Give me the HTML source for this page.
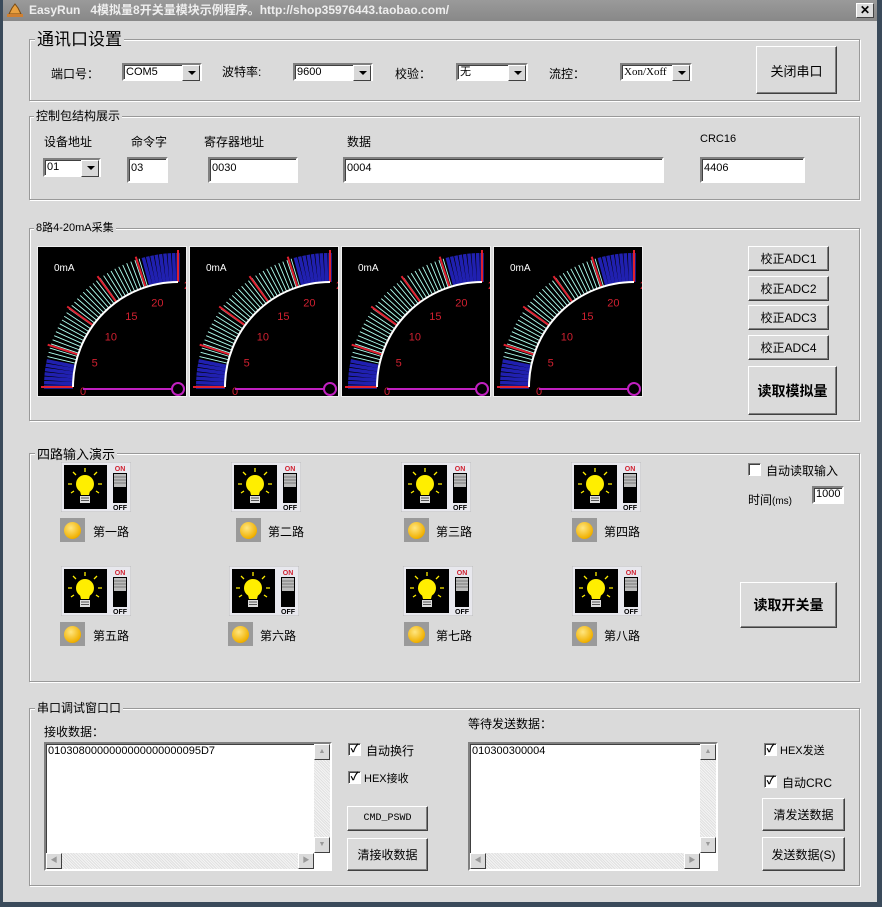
<!DOCTYPE html>
<html><head><meta charset="utf-8">
<style>
*{box-sizing:border-box;margin:0;padding:0}
body{width:882px;height:907px;background:#3a4a5a;font-family:"Liberation Sans","Noto Sans CJK SC","WenQuanYi Zen Hei",sans-serif;font-size:12px;color:#000;position:relative;overflow:hidden}
.abs{position:absolute}
#win{position:absolute;left:3px;top:0;width:874px;height:902px;background:#dadada}
#title{position:absolute;left:3px;top:0;width:874px;height:21px;background:linear-gradient(#9a9a9a,#888);color:#eee;font-weight:bold;font-size:12px;line-height:21px;padding-left:26px}
.close{position:absolute;left:856px;top:3px;width:18px;height:15px;background:#dcdcdc;border:1px solid;border-color:#fff #444 #444 #fff;font:bold 12px "Liberation Sans";text-align:center;line-height:13px}
.grp{position:absolute;border:1px solid #999;box-shadow:1px 1px 0 #fff, inset 1px 1px 0 #fff}
.gl{position:absolute;background:#dadada;padding:0 2px;white-space:nowrap}
.t{position:absolute;white-space:nowrap}
.in{position:absolute;background:#fff;border:2px solid;border-color:#808080 #fff #fff #808080;box-shadow:inset 1px 1px 0 #404040;font-size:11px;padding:2px 2px;line-height:14px;font-family:"Liberation Sans",sans-serif}
.cb{position:absolute;background:#fff;border:2px solid;border-color:#808080 #fff #fff #808080;box-shadow:inset 1px 1px 0 #404040;font-size:11px;padding:1px 2px;line-height:13px}
.cb::after{content:"";position:absolute;right:0;top:0;width:16px;height:100%;background:#d8d8d8 ;border:1px solid;border-color:#fff #404040 #404040 #fff}
.cb::before{content:"";position:absolute;right:4px;top:6px;border:4px solid transparent;border-top:4px solid #000;z-index:2}
.btn{position:absolute;background:#dadada;border:1px solid;border-color:#fff #404040 #404040 #fff;box-shadow:inset -1px -1px 0 #808080;text-align:center;display:flex;align-items:center;justify-content:center;white-space:nowrap}
.chk{position:absolute;width:13px;height:13px;background:#fff;border:1px solid;border-color:#808080 #fff #fff #808080;box-shadow:inset 1px 1px 0 #404040;font-size:11px;line-height:11px;text-align:center;font-weight:bold}
.gauge{position:absolute;width:150px;height:151px;background:#000;border:1px solid #eee}
.sw{position:absolute;width:70px;height:50px}
.led{position:absolute;width:25px;height:24px;background:#9a9a9a}
.led::after{content:"";position:absolute;left:4px;top:4px;width:17px;height:17px;border-radius:50%;background:radial-gradient(circle at 40% 35%,#ffe680,#f0b000 70%,#b07800)}
.ta{position:absolute;background:#fff;border:2px solid;border-color:#808080 #fff #fff #808080;box-shadow:inset 1px 1px 0 #404040;font-size:11px;padding:1px 2px}
.vs{position:absolute;right:0;top:0;width:16px;bottom:16px;background:repeating-linear-gradient(45deg,#e0e0e0 0 1px,#f4f4f4 1px 2px)}
.hs{position:absolute;left:0;bottom:0;height:16px;right:16px;background:repeating-linear-gradient(45deg,#e0e0e0 0 1px,#f4f4f4 1px 2px)}
.sb{position:absolute;width:16px;height:16px;background:#dadada;border:1px solid;border-color:#fff #404040 #404040 #fff;font-size:7px;color:#999;text-align:center;line-height:14px}
</style></head><body>
<div id="win"></div>
<div id="title">EasyRun&nbsp;&nbsp; 4模拟量8开关量模块示例程序。http://shop35976443.taobao.com/</div>
<svg class="abs" style="left:6px;top:3px" width="18" height="16"><path d="M9 1 L12 5 L15 11 L3 11 L6 5Z" fill="#e8a040" stroke="#7a4a10"/><rect x="1" y="11" width="16" height="3" fill="#d08030"/></svg>
<div class="close">✕</div>

<div class="grp" style="left:29px;top:39px;width:831px;height:62px"></div>
<div class="gl" style="left:35px;top:30px;font-size:17px;line-height:20px">通讯口设置</div>
<div class="t" style="left:51px;top:65px">端口号：</div>
<div class="cb" style="left:122px;top:63px;width:80px;height:18px">COM5</div>
<div class="t" style="left:222px;top:63px">波特率:</div>
<div class="cb" style="left:293px;top:63px;width:80px;height:18px">9600</div>
<div class="t" style="left:395px;top:65px">校验：</div>
<div class="cb" style="left:456px;top:63px;width:72px;height:18px">无</div>
<div class="t" style="left:549px;top:65px">流控：</div>
<div class="cb" style="left:620px;top:63px;width:72px;height:18px;font-family:'Liberation Serif';font-size:11px">Xon/Xoff</div>
<div class="btn" style="left:756px;top:46px;width:81px;height:48px;font-size:13px">关闭串口</div>

<div class="grp" style="left:29px;top:116px;width:831px;height:84px"></div>
<div class="gl" style="left:34px;top:107px">控制包结构展示</div>
<div class="t" style="left:44px;top:133px">设备地址</div>
<div class="t" style="left:131px;top:133px">命令字</div>
<div class="t" style="left:204px;top:133px">寄存器地址</div>
<div class="t" style="left:347px;top:133px">数据</div>
<div class="t" style="left:700px;top:133px;font-size:11px">CRC16</div>
<div class="cb" style="left:43px;top:158px;width:58px;height:19px">01</div>
<div class="in" style="left:127px;top:157px;width:41px;height:26px">03</div>
<div class="in" style="left:208px;top:157px;width:90px;height:26px">0030</div>
<div class="in" style="left:343px;top:157px;width:321px;height:26px">0004</div>
<div class="in" style="left:700px;top:157px;width:105px;height:26px">4406</div>

<div class="grp" style="left:29px;top:228px;width:831px;height:193px"></div>
<div class="gl" style="left:34px;top:219px;font-size:11px">8路4-20mA采集</div>
<div class="gauge" style="left:37px;top:246px"></div>
<div class="gauge" style="left:189px;top:246px"></div>
<div class="gauge" style="left:341px;top:246px"></div>
<div class="gauge" style="left:493px;top:246px"></div>
<div class="btn" style="left:748px;top:246px;width:81px;height:25px">校正ADC1</div>
<div class="btn" style="left:748px;top:276px;width:81px;height:25px">校正ADC2</div>
<div class="btn" style="left:748px;top:305px;width:81px;height:25px">校正ADC3</div>
<div class="btn" style="left:748px;top:335px;width:81px;height:25px">校正ADC4</div>
<div class="btn" style="left:748px;top:366px;width:89px;height:49px;font-size:14px;font-weight:bold">读取模拟量</div>

<div class="grp" style="left:29px;top:453px;width:831px;height:229px"></div>
<div class="gl" style="left:35px;top:444px;font-size:13px">四路输入演示</div>
<svg width="0" height="0" style="position:absolute"><defs>
<g id="swi">
<rect x="0" y="0" width="70" height="50" fill="#e8e8ee" stroke="#bbb"/>
<rect x="3" y="3" width="43" height="44" fill="#000"/>
<circle cx="24" cy="22" r="9" fill="#ffee00"/>
<path d="M19 29 L29 29 L28 33 L20 33Z" fill="#ffee00"/>
<rect x="19" y="34" width="10" height="7" fill="#ddd"/>
<path d="M20 36h8M20 38.5h8" stroke="#555"/>
<path d="M24 6v4M12 10l3 3M36 10l-3 3M7 22h4M37 22h4M10 31l3-2M38 31l-3-2" stroke="#ffee00" stroke-width="1.3"/>
<text x="59" y="9" font-size="7" fill="#d02030" text-anchor="middle" font-family="Liberation Sans" font-weight="bold">ON</text>
<rect x="52" y="11" width="14" height="30" fill="#000"/>
<rect x="53" y="12" width="12" height="13" fill="#bbb"/>
<path d="M53 15h12M53 18h12M53 21h12" stroke="#666" stroke-width=".8"/>
<text x="59" y="48" font-size="7" fill="#000" text-anchor="middle" font-family="Liberation Sans" font-weight="bold">OFF</text>
</g></defs></svg>
<svg class="sw" style="left:61px;top:462px"><use href="#swi"/></svg>
<svg class="sw" style="left:231px;top:462px"><use href="#swi"/></svg>
<svg class="sw" style="left:401px;top:462px"><use href="#swi"/></svg>
<svg class="sw" style="left:571px;top:462px"><use href="#swi"/></svg>
<svg class="sw" style="left:61px;top:566px"><use href="#swi"/></svg>
<svg class="sw" style="left:229px;top:566px"><use href="#swi"/></svg>
<svg class="sw" style="left:403px;top:566px"><use href="#swi"/></svg>
<svg class="sw" style="left:572px;top:566px"><use href="#swi"/></svg>
<div class="led" style="left:60px;top:518px"></div><div class="t" style="left:93px;top:523px">第一路</div>
<div class="led" style="left:236px;top:518px"></div><div class="t" style="left:268px;top:523px">第二路</div>
<div class="led" style="left:404px;top:518px"></div><div class="t" style="left:436px;top:523px">第三路</div>
<div class="led" style="left:572px;top:518px"></div><div class="t" style="left:604px;top:523px">第四路</div>
<div class="led" style="left:60px;top:622px"></div><div class="t" style="left:93px;top:627px">第五路</div>
<div class="led" style="left:228px;top:622px"></div><div class="t" style="left:260px;top:627px">第六路</div>
<div class="led" style="left:404px;top:622px"></div><div class="t" style="left:436px;top:627px">第七路</div>
<div class="led" style="left:572px;top:622px"></div><div class="t" style="left:604px;top:627px">第八路</div>
<div class="chk" style="left:748px;top:463px"></div><div class="t" style="left:766px;top:462px">自动读取输入</div>
<div class="t" style="left:748px;top:491px">时间<span style="font-size:10px">(ms)</span></div>
<div class="in" style="left:812px;top:486px;width:32px;height:18px;padding:0 2px;line-height:13px">1000</div>
<div class="btn" style="left:740px;top:582px;width:97px;height:46px;font-size:14px;font-weight:bold">读取开关量</div>

<div class="grp" style="left:29px;top:708px;width:831px;height:178px"></div>
<div class="gl" style="left:35px;top:699px">串口调试窗口口</div>
<div class="t" style="left:44px;top:723px">接收数据：</div>
<div class="ta" style="left:44px;top:742px;width:288px;height:129px">0103080000000000000000095D7
<div class="vs"></div><div class="hs"></div>
<div class="sb" style="right:0;top:0">▲</div><div class="sb" style="right:0;bottom:16px">▼</div>
<div class="sb" style="left:0;bottom:0">◀</div><div class="sb" style="right:16px;bottom:0">▶</div></div>
<div class="chk" style="left:348px;top:743px">✓</div><div class="t" style="left:366px;top:742px">自动换行</div>
<div class="chk" style="left:348px;top:771px">✓</div><div class="t" style="left:364px;top:770px;font-size:11px">HEX接收</div>
<div class="btn" style="left:347px;top:806px;width:81px;height:25px;font-size:10px;font-family:'Liberation Mono'">CMD_PSWD</div>
<div class="btn" style="left:347px;top:838px;width:81px;height:33px">清接收数据</div>
<div class="t" style="left:468px;top:715px">等待发送数据：</div>
<div class="ta" style="left:468px;top:742px;width:250px;height:129px">010300300004
<div class="vs"></div><div class="hs"></div>
<div class="sb" style="right:0;top:0">▲</div><div class="sb" style="right:0;bottom:16px">▼</div>
<div class="sb" style="left:0;bottom:0">◀</div><div class="sb" style="right:16px;bottom:0">▶</div></div>
<div class="chk" style="left:764px;top:743px">✓</div><div class="t" style="left:780px;top:742px;font-size:11px">HEX发送</div>
<div class="chk" style="left:764px;top:775px">✓</div><div class="t" style="left:782px;top:774px">自动CRC</div>
<div class="btn" style="left:762px;top:798px;width:83px;height:33px">清发送数据</div>
<div class="btn" style="left:762px;top:837px;width:83px;height:34px">发送数据(S)</div>

<script>
(function(){
var cx=140,cy=140,ri=105,ro=134,s='';
var N=48;
for(var i=0;i<=N;i++){var v=25*i/N,a=Math.PI*(1-v/25/2);
var blue=(v<3.6||v>20.8);
var col=blue?'#2020b0':'#b0fff0';var w=blue?3.5:0.9;
var c=Math.cos(a),sn=Math.sin(a);
s+='<line x1="'+(cx+ri*c).toFixed(1)+'" y1="'+(cy-ri*sn).toFixed(1)+'" x2="'+(cx+ro*c).toFixed(1)+'" y2="'+(cy-ro*sn).toFixed(1)+'" stroke="'+col+'" stroke-width="'+w+'"/>';}
for(var k=0;k<=5;k++){var a=Math.PI*(1-k/10),c=Math.cos(a),sn=Math.sin(a);
s+='<line x1="'+(cx+ri*c).toFixed(1)+'" y1="'+(cy-ri*sn).toFixed(1)+'" x2="'+(cx+(ro+3)*c).toFixed(1)+'" y2="'+(cy-(ro+3)*sn).toFixed(1)+'" stroke="#e02030" stroke-width="2"/>';
var lr=k==0?102:93;var tx=cx+lr*c+(k==0?4:2),ty=cy-lr*sn+8;
if(k==5){tx=146;ty=42;}
s+='<text x="'+tx.toFixed(1)+'" y="'+ty.toFixed(1)+'" fill="#d02030" font-size="11" font-family="Liberation Sans">'+(k*5)+'</text>';}
s+='<path d="M'+(cx-ri)+' '+cy+' A'+ri+' '+ri+' 0 0 1 '+cx+' '+(cy-ri)+'" fill="none" stroke="#fff" stroke-width="2"/>';
s+='<line x1="45" y1="142" x2="134" y2="142" stroke="#c020c0" stroke-width="2"/><circle cx="140" cy="142" r="6" fill="none" stroke="#c020c0" stroke-width="2"/>';
s+='<text x="16" y="24" fill="#fff" font-size="10" font-family="Liberation Sans">0mA</text>';
var g=document.querySelectorAll('.gauge');
for(var j=0;j<g.length;j++)g[j].innerHTML='<svg width="148" height="149" style="display:block">'+s+'</svg>';
})();
</script>
</body></html>
